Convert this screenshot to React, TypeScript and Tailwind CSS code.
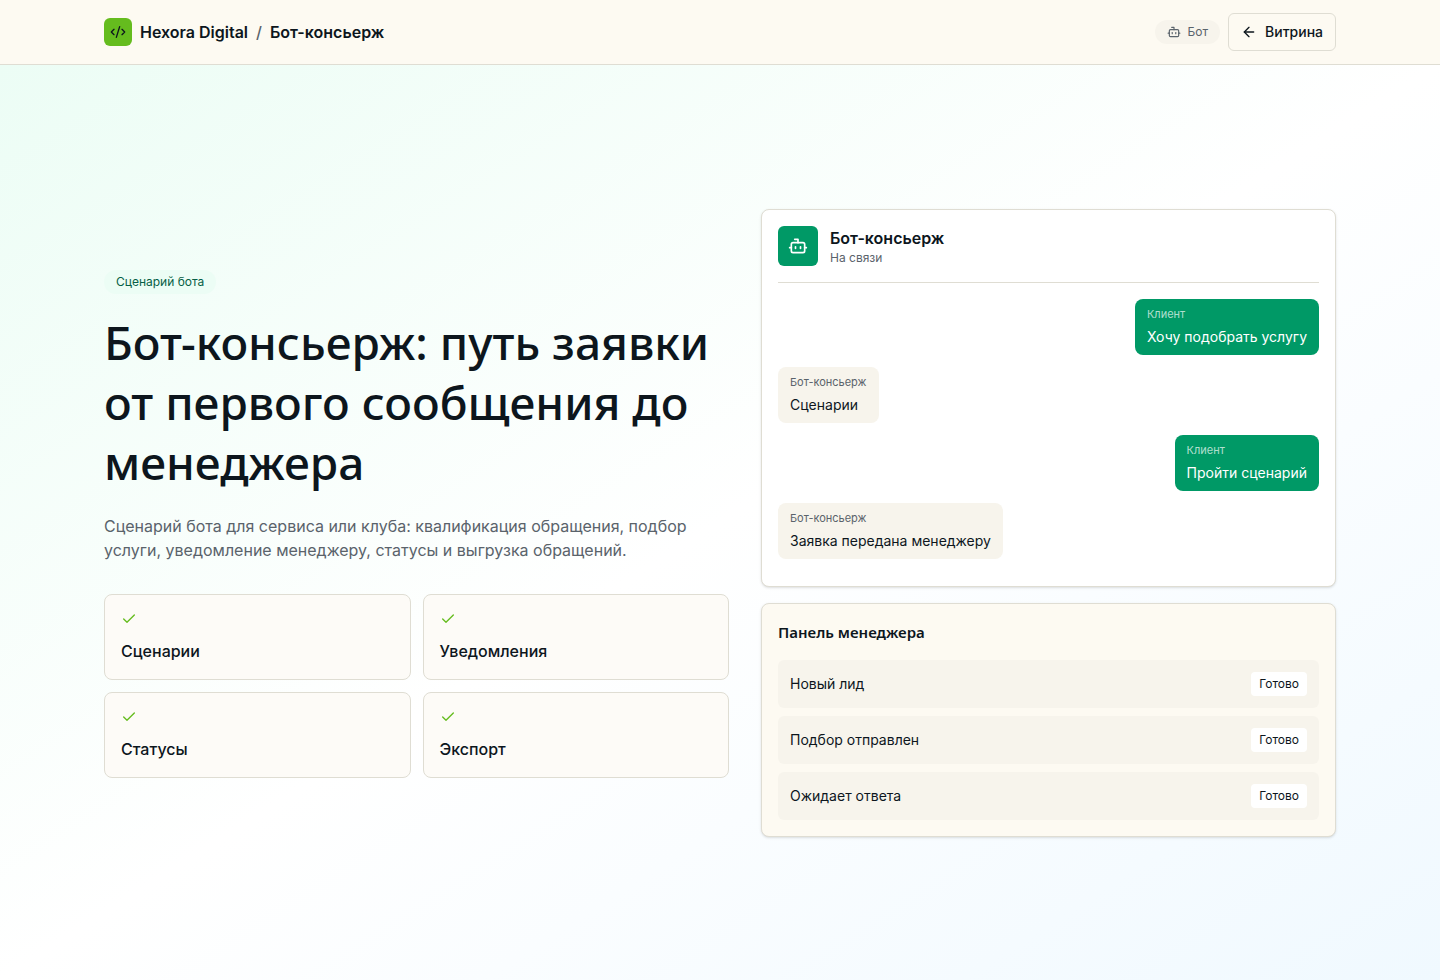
import { ArrowLeft, Bot, Check, CodeXml } from "lucide-react";

const features = ["Сценарии", "Уведомления", "Статусы", "Экспорт"];

const messages = [
  { client: true, text: "Хочу подобрать услугу" },
  { client: false, text: "Сценарии" },
  { client: true, text: "Пройти сценарий" },
  { client: false, text: "Заявка передана менеджеру" },
];

const leads = ["Новый лид", "Подбор отправлен", "Ожидает ответа"];

function Header() {
  return (
    <header className="border-b border-[#dfddd3] bg-[#fdfaf2]">
      <div className="mx-auto flex min-h-16 w-full max-w-7xl items-center justify-between px-6">
        <div className="flex items-center gap-2 font-semibold">
          <span className="flex size-7 items-center justify-center rounded-md bg-[#65bc1e]">
            <CodeXml className="size-4" />
          </span>
          <span>Hexora Digital</span>
          <span className="font-medium text-[#5a636b]">/</span>
          <span>Бот-консьерж</span>
        </div>
        <div className="flex items-center gap-2">
          <span className="flex items-center gap-1.5 rounded-full bg-[#f7f4ec] px-3 py-1 text-xs text-[#5a636b]">
            <Bot className="size-3.5" />
            Бот
          </span>
          <a
            href="#"
            className="flex items-center gap-2 rounded-md border border-[#dfddd3] px-3 py-2 text-sm font-medium"
          >
            <ArrowLeft className="size-4" />
            Витрина
          </a>
        </div>
      </div>
    </header>
  );
}

function Intro() {
  return (
    <div>
      <span className="inline-flex rounded-full bg-[#ecfdf5] px-3 py-1 text-xs text-[#065f46]">Сценарий бота</span>
      <h1 className="mt-[18px] font-['Noto_Sans',sans-serif] text-[46px] leading-[60px] font-medium">
        Бот-консьерж: путь заявки от первого сообщения до менеджера
      </h1>
      <p className="mt-[22px] max-w-2xl text-base text-[#5a636b]">
        Сценарий бота для сервиса или клуба: квалификация обращения, подбор услуги, уведомление менеджеру, статусы и
        выгрузка обращений.
      </p>
      <ul className="mt-8 grid grid-cols-2 gap-3">
        {features.map((name) => (
          <li key={name} className="rounded-lg border border-[#dfddd3] bg-[#fdfbf7] p-4 font-medium">
            <Check className="mb-3 size-4 text-[#65bc1e]" />
            {name}
          </li>
        ))}
      </ul>
    </div>
  );
}

function Chat() {
  return (
    <section className="rounded-lg border border-[#dfddd3] bg-white p-4 shadow-sm">
      <div className="flex items-center gap-3 border-b border-[#dfddd3] pb-4">
        <span className="flex size-10 items-center justify-center rounded-md bg-[#009966] text-white">
          <Bot className="size-5" />
        </span>
        <div>
          <h2 className="leading-6 font-semibold">Бот-консьерж</h2>
          <p className="text-xs text-[#5a636b]">На связи</p>
        </div>
      </div>
      <div className="flex flex-col gap-3 pt-4 pb-[11px]">
        {messages.map((m) => (
          <div
            key={m.text}
            className={
              m.client
                ? "self-end rounded-lg bg-[#009966] px-3 py-2 text-white"
                : "self-start rounded-lg bg-[#f7f4ec] px-3 py-2"
            }
          >
            <p
              className={
                m.client ? "text-[11px] leading-[14px] text-white/70" : "text-[11px] leading-[14px] text-[#5a636b]"
              }
            >
              {m.client ? "Клиент" : "Бот-консьерж"}
            </p>
            <p className="mt-1.5 text-sm">{m.text}</p>
          </div>
        ))}
      </div>
    </section>
  );
}

function ManagerPanel() {
  return (
    <section className="rounded-lg border border-[#dfddd3] bg-[#fdfaf2] p-4 shadow-sm">
      <h2 className="font-['Noto_Sans',sans-serif] text-[15px] leading-6 font-semibold">Панель менеджера</h2>
      <ul className="mt-4 grid gap-2">
        {leads.map((lead) => (
          <li key={lead} className="flex items-center justify-between rounded-md bg-[#f7f4ec] p-3 text-sm">
            {lead}
            <span className="rounded bg-white px-2 py-1 text-xs">Готово</span>
          </li>
        ))}
      </ul>
    </section>
  );
}

export default function App() {
  return (
    <div className="flex min-h-screen flex-col bg-white font-['Inter',sans-serif] text-[#0d161d]">
      <Header />
      <main className="flex flex-1 items-center bg-linear-to-br from-[#ecfdf5] via-white to-[#f0f9ff]">
        <div className="mx-auto grid w-full max-w-7xl items-center gap-8 px-6 py-12 lg:grid-cols-[1fr_0.92fr]">
          <Intro />
          <div className="grid gap-4">
            <Chat />
            <ManagerPanel />
          </div>
        </div>
      </main>
    </div>
  );
}
